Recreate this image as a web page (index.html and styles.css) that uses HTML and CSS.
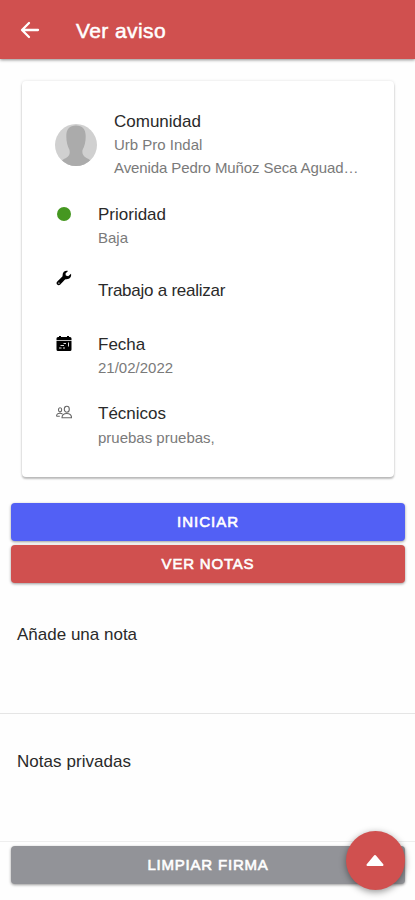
FILE: index.html
```html
<!DOCTYPE html>
<html lang="es">
<head>
<meta charset="utf-8">
<title>Ver aviso</title>
<link rel="stylesheet" href="styles.css">
</head>
<body>
<div class="app">
  <header class="toolbar">
    <svg class="back" viewBox="0 0 20 20"><path d="M9 3 2 10l7 7M2.500 10H18"/></svg>
    <h1>Ver aviso</h1>
  </header>
  <section class="card">
    <div class="item community">
      <svg class="avatar" viewBox="0 0 42 42"><defs><clipPath id="round"><circle cx="21" cy="21" r="21"/></clipPath></defs><g clip-path="url(#round)"><path fill="#d0d0d0" d="M0 0h42v42H0z"/><path fill="#ababab" d="M21 1.500c6.500 0 9.700 4 9.700 10.500 0 6-1 10-3.200 14-.6 4 .7 6 4 8 3 1.500 5 2.500 6 5v4H5v-4c1-2.500 3-3.500 6-5 3.300-2 4.200-4 3.500-8-2-4-3.200-8-3.200-14C11.300 5.500 14.500 1.500 21 1.500z"/></g></svg>
      <div class="label"><h2>Comunidad</h2><p>Urb Pro Indal</p><p class="address">Avenida Pedro Muñoz Seca Aguad…</p></div>
    </div>
    <div class="item priority"><span class="dot"></span><div class="label"><h2>Prioridad</h2><p>Baja</p></div></div>
    <div class="item job">
      <svg class="icon" viewBox="0 0 16 16"><path d="M15 3.800 12.200 6.200 9.800 5.600 9.500 3.400 12 .9C9.500.2 6.500 1.700 6.600 5c0 .8 0 1.300-.5 1.800L1.300 11.500c-1 1-.9 2.300-.1 3.100.8.800 2.200.8 3.100-.2L8.800 9.700c.5-.5 1-.5 1.800-.5C14 9.200 15.700 6.500 15 3.800z"/><circle cx="2.900" cy="13.100" r=".7" fill="#fff"/></svg>
      <div class="label"><h2>Trabajo a realizar</h2></div>
    </div>
    <div class="item date">
      <svg class="icon" viewBox="0 0 16 16"><path d="M3 0h2v1h6V0h2v1h1q1.500 0 1.500 1.500V4H.5V2.500Q.5 1 2 1h1zM.5 4.700h15v8.800Q15.500 15 14 15H2Q.5 15 .5 13.500z"/><path class="marks" d="M7.500 7.500H10M4.500 9.500H8M3 12h2.500M7 12h2M12.500 6.500v4"/></svg>
      <div class="label"><h2>Fecha</h2><p>21/02/2022</p></div>
    </div>
    <div class="item people">
      <svg class="icon outline" viewBox="0 0 16 16"><path d="M8.300 4.200c0-3.900 5-3.900 5 0 0 4-5 4-5 0zM6 12.700c0-2.900 2-4.200 4.800-4.200s4.700 1.300 4.700 4.200zM2.500 4.800c0-2.700 3.200-2.700 3.200 0s-3.200 2.700-3.200 0zM.5 11.200C.6 9.300 2 8.300 4 8.300c1 0 1.800.2 2.500.6M.5 11.200h3.300"/></svg>
      <div class="label"><h2>Técnicos</h2><p>pruebas pruebas,</p></div>
    </div>
  </section>
  <div class="actions">
    <button class="button start">INICIAR</button>
    <button class="button notes">VER NOTAS</button>
  </div>
  <section class="note first"><span>Añade una nota</span></section>
  <section class="note second"><span>Notas privadas</span></section>
  <div class="actions bottom"><button class="button clear">LIMPIAR FIRMA</button></div>
  <button class="fab" aria-label="Subir"><svg viewBox="0 0 20 14"><path d="M10 2 17.500 11H2.500z"/></svg></button>
</div>
</body>
</html>
```
FILE: styles.css
```css
* { box-sizing: border-box; }
body { margin: 0; background: #fefefe; font-family: "Liberation Sans", Arial, sans-serif; color: #2a2a2a; }
.app { position: relative; height: 900px; overflow: hidden; }
h1, h2, p { margin: 0; font-weight: 400; white-space: nowrap; }
.toolbar { height: 59px; background: #d0504f; color: #fff; display: flex; align-items: center; padding: 3px 20px 0; box-shadow: 0 1px 3px rgba(0,0,0,.45); }
.back { width: 20px; height: 20px; margin-right: 36px; margin-top: -2px; fill: none; stroke: #fff; stroke-width: 2.3; stroke-linejoin: round; stroke-linecap: round; }
h1 { font-size: 21px; letter-spacing: .4px; -webkit-text-stroke: .5px #fff; }
.card { height: 396px; margin: 22px 21px 0 22px; padding: 29px 32px 0 33px; border-radius: 4px; background: #fff; box-shadow: 0 2px 2px rgba(0,0,0,.24), 0 0 3px rgba(0,0,0,.12); }
.item { display: flex; align-items: flex-start; }
.label { min-width: 0; }
h2 { font-size: 17px; line-height: 24px; }
p { font-size: 15px; line-height: 23px; color: #7a7a7a; }
h2 + p { margin-top: -1px; }
.community { height: 93px; }
.avatar { width: 42px; height: 42px; margin: 14px 17px 0 0; }
.address { letter-spacing: -.1px; }
.priority { height: 64px; }
.dot { width: 14px; height: 14px; border-radius: 50%; background: #459720; margin: 4px 27px 0 2px; }
.icon { width: 16px; height: 16px; margin: 3px 26px 0 1px; }
.job { height: 66px; }
.job .label { padding-top: 12px; }
.job h2 { letter-spacing: -.25px; }
.date { height: 69px; }
.marks { fill: none; stroke: #ddd; stroke-width: 1; }
.people p { margin-top: 0; }
.outline { fill: none; stroke: #666; stroke-width: 1.1; }
.actions { padding: 26px 10px 0 11px; }
.button { display: block; width: 100%; height: 38px; padding: 0 0 1px; border: 0; border-radius: 4px; color: #fff; font: 15px "Liberation Sans", Arial, sans-serif; letter-spacing: .8px; -webkit-text-stroke: .6px #fff; box-shadow: 0 1px 3px rgba(0,0,0,.4); }
.start { background: #5260f5; letter-spacing: 1px; }
.notes { background: #d0504f; margin-top: 4px; }
.clear { background: #929398; }
.note { padding-left: 17px; font-size: 17px; line-height: 24px; border-bottom: 1px solid #e5e5e5; }
.first { height: 131px; padding-top: 40px; }
.second { height: 128px; padding-top: 36px; border-color: #eee; letter-spacing: .05px; }
.bottom { padding-top: 4px; }
.fab { position: absolute; left: 346px; top: 831px; width: 59px; height: 59px; border: 0; border-radius: 50%; padding: 0; background: #d0504f; box-shadow: 0 2px 7px rgba(0,0,0,.42); display: flex; align-items: center; justify-content: center; }
.fab svg { width: 20px; height: 14px; margin-right: 1px; fill: #fff; stroke: #fff; stroke-width: 2; stroke-linejoin: round; }
```
